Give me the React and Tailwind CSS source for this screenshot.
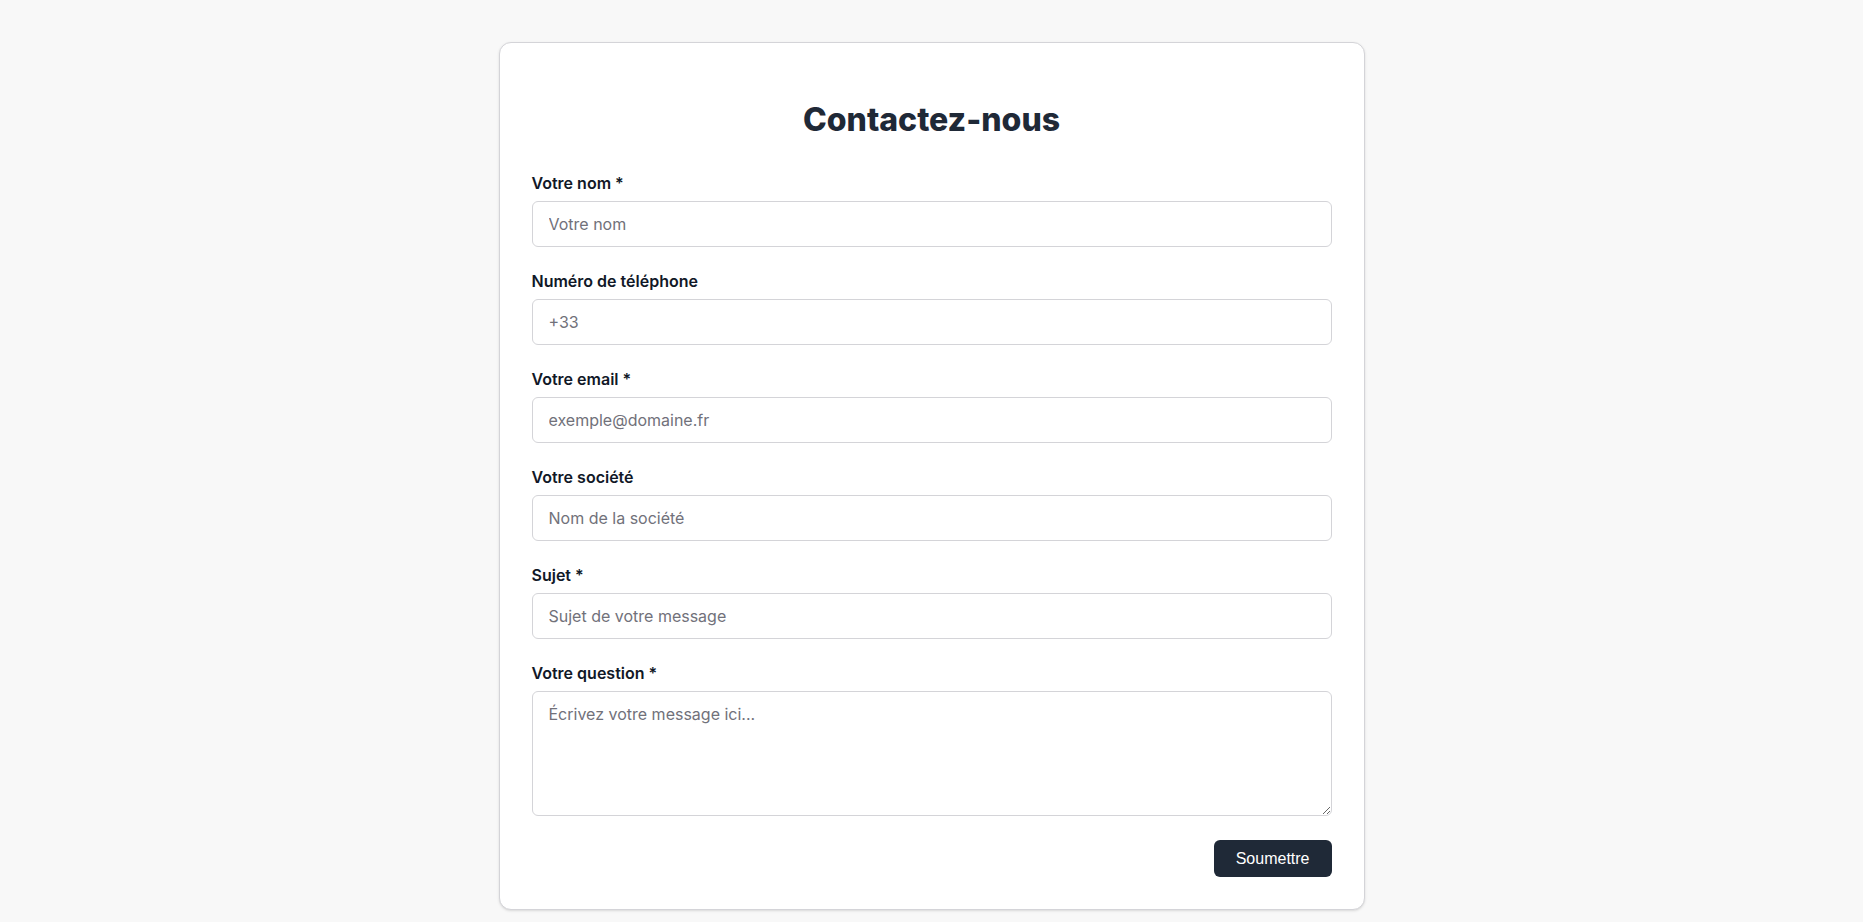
import React from 'react';

const fields = [
  { label: 'Votre nom *', placeholder: 'Votre nom', type: 'text' },
  { label: 'Numéro de téléphone', placeholder: '+33', type: 'tel' },
  { label: 'Votre email *', placeholder: 'exemple@domaine.fr', type: 'email' },
  { label: 'Votre société', placeholder: 'Nom de la société', type: 'text' },
  { label: 'Sujet *', placeholder: 'Sujet de votre message', type: 'text' },
];

const App = () => {
  return (
    <div className="min-h-screen bg-[#f8f8f8] pt-[42px] pb-[12px] font-['Inter',sans-serif]">
      <div className="mx-auto w-[866px] bg-white border border-[#d4d4d8] rounded-xl shadow-sm px-8 pb-8 pt-[57px]">
        <h1 className="text-[32px] leading-10 font-extrabold text-center text-[#1f2937] mb-[33px]">
          Contactez-nous
        </h1>

        <form className="flex flex-col gap-6" onSubmit={(e) => e.preventDefault()}>
          {fields.map((f) => (
            <div key={f.label} className="flex flex-col">
              <label className="text-base leading-5 font-semibold text-[#111827] mb-2">{f.label}</label>
              <input
                type={f.type}
                placeholder={f.placeholder}
                className="h-[46px] w-full px-4 text-base border border-[#d4d4d8] rounded-md text-[#111827] placeholder:text-[#71717a] outline-none"
              />
            </div>
          ))}

          {/* Message */}
          <div className="flex flex-col">
            <label className="text-base leading-5 font-semibold text-[#111827] mb-2">Votre question *</label>
            <textarea
              placeholder="Écrivez votre message ici..."
              className="h-[125px] w-full px-4 py-[10px] text-base leading-6 border border-[#d4d4d8] rounded-md text-[#111827] placeholder:text-[#71717a] outline-none"
            />
          </div>

          <div className="flex justify-end">
            <button
              type="submit"
              className="h-[37px] px-[22px] bg-[#1f2937] text-white text-base rounded-md font-['Liberation_Sans',Arial,sans-serif]"
            >
              Soumettre
            </button>
          </div>
        </form>
      </div>
    </div>
  );
};

export default App;
